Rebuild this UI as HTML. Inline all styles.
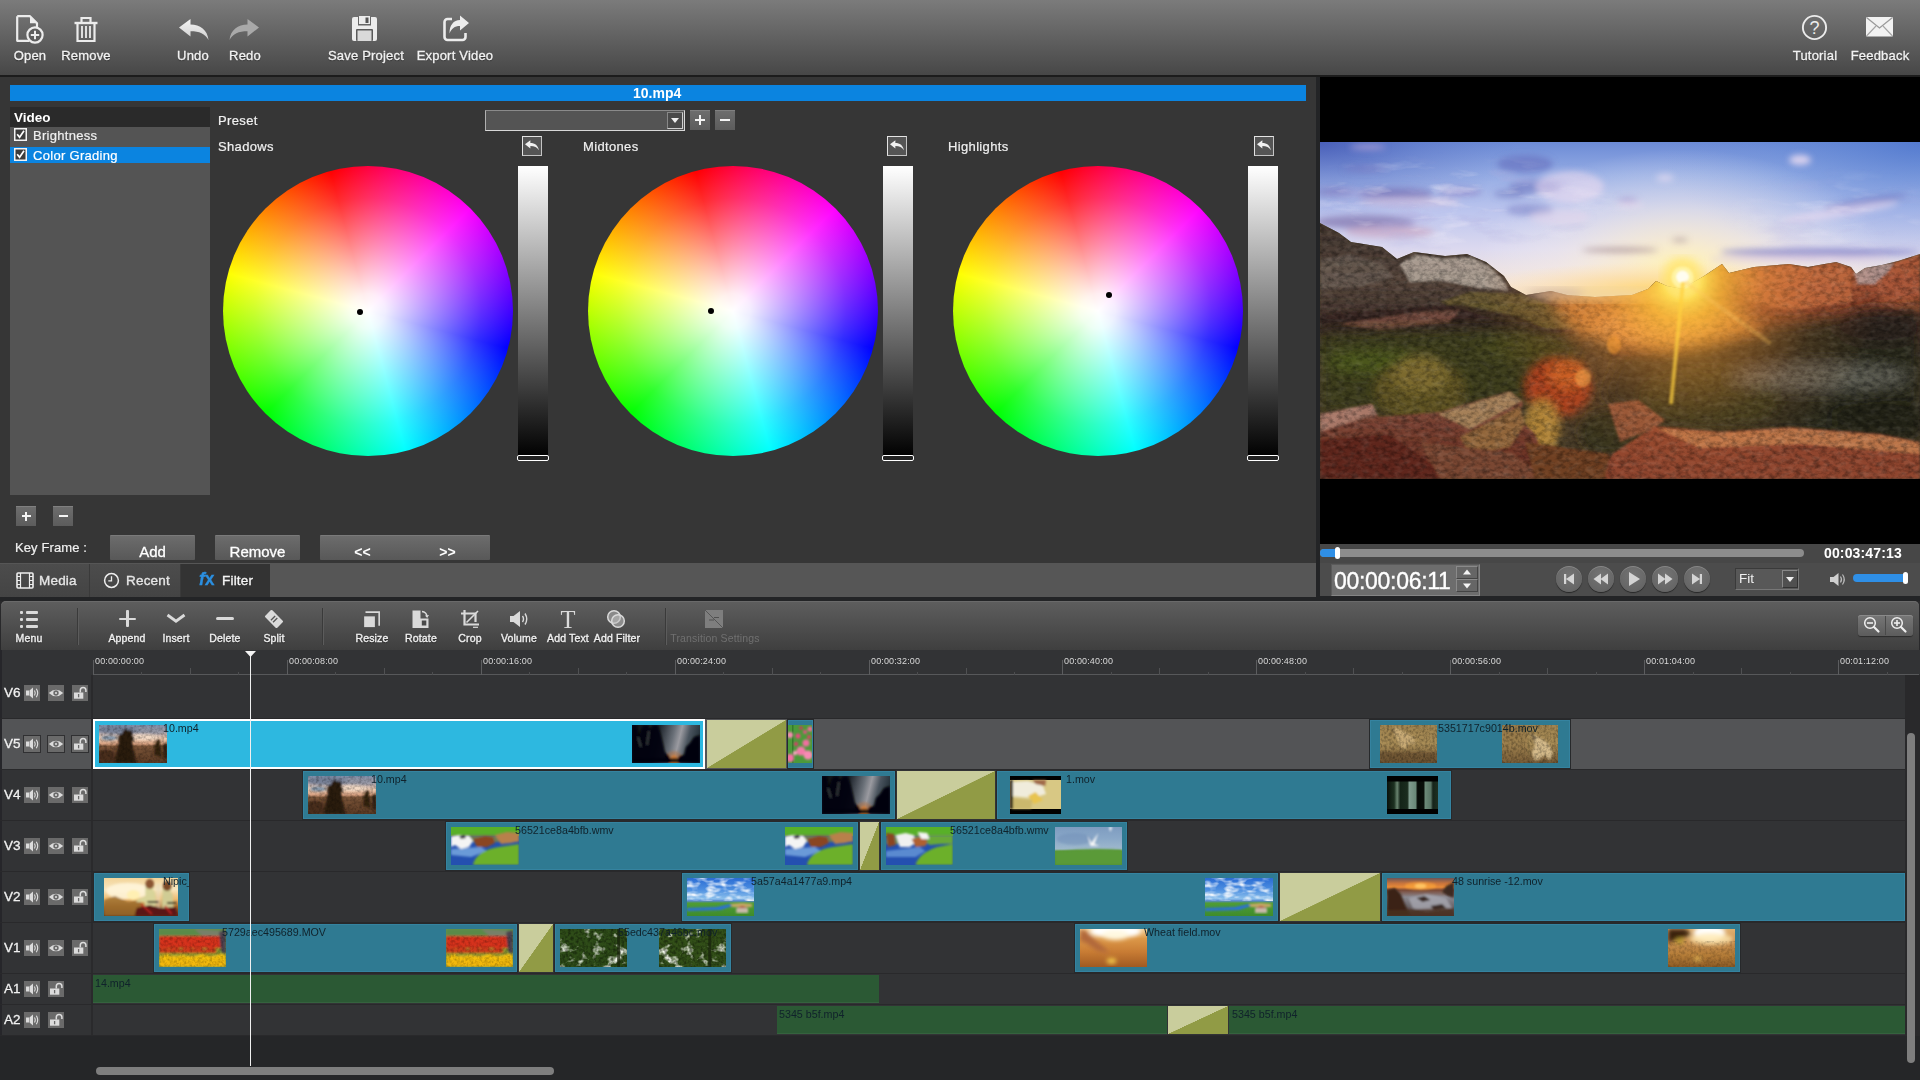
<!DOCTYPE html><html><head><meta charset="utf-8"><title>Video Editor</title><style>
*{box-sizing:border-box;margin:0;padding:0}
html,body{width:1920px;height:1080px;overflow:hidden;background:#29292b;font-family:"Liberation Sans",sans-serif;color:#f0f0f0}
div,span,svg{position:absolute}
.t{white-space:nowrap;line-height:1;will-change:transform}
.tb{letter-spacing:.2px;font-size:13px;top:49px;height:14px;text-align:center;color:#f2f2f2;-webkit-text-stroke:.3px #f2f2f2;text-shadow:0 1px 1px rgba(0,0,0,.45)}
.tl{letter-spacing:.15px;font-size:10.5px;top:633px;height:12px;text-align:center;color:#f0f0f0;-webkit-text-stroke:.35px #f0f0f0;text-shadow:0 1px 1px rgba(0,0,0,.5)}
.btn{background:linear-gradient(#6c6c6c,#585858);border-top:1px solid #7a7a7a;border-radius:1px}
.sq{background:linear-gradient(#6e6e6e,#5c5c5c);box-shadow:inset 0 1px 0 #808080}
.lbl{font-size:13px;color:#f0f0f0}
.ib{width:16px;height:16px;background:#6a6a6a}
.th{font-size:13.5px;color:#f0f0f0;left:4px;-webkit-text-stroke:.3px #f0f0f0}
.clip{background:#2f7a92;box-shadow:0 0 0 1px #27292b,inset 0 0 0 1px #3583a0}
.aclip{background:#2b5934;box-shadow:inset 0 -1px 0 #35623e}
.cl{font-size:10.7px;color:#10222b;top:3.5px}
.tr{background:linear-gradient(to bottom right,#c9cd9c 0,#c9cd9c 49.7%,#919b45 50.3%,#919b45 100%)}
.rl{font-size:9px;color:#d8d8d8;top:657px;letter-spacing:.14px}
</style></head><body>
<div style="left:0px;top:0px;width:1920px;height:75px;background:linear-gradient(#7b7b7b,#474747)"></div>
<div style="left:0px;top:75px;width:1920px;height:2px;background:#1c1c1c"></div>
<svg style="left:14px;top:13px" width="34" height="34" viewBox="0 0 34 34"><path d="M3.2 3.2h12.8l7 7v8.5" fill="none" stroke="#ececec" stroke-width="2.2" stroke-linejoin="round"/><path d="M3.2 3.2v24.6h12" fill="none" stroke="#ececec" stroke-width="2.2" stroke-linejoin="round"/><path d="M16 3.2v7h7z" fill="#ececec"/><circle cx="21" cy="22" r="7.6" fill="#5d5d5d" stroke="#ececec" stroke-width="2.2"/><path d="M21 17.8v8.4M16.8 22h8.4" stroke="#ececec" stroke-width="2"/></svg>
<span class="t tb" style="left:-30.0px;width:120px;">Open</span>
<svg style="left:72px;top:14px" width="28" height="30" viewBox="0 0 28 30"><path d="M2.5 9h23" stroke="#ececec" stroke-width="2.4"/><path d="M9.5 8.5v-4.5h9v4.5" fill="none" stroke="#ececec" stroke-width="2.2"/><path d="M5.5 10v17h17v-17" fill="none" stroke="#ececec" stroke-width="2.2"/><path d="M10 12v12M14 12v12M18 12v12" stroke="#ececec" stroke-width="1.8"/></svg>
<span class="t tb" style="left:26.0px;width:120px;">Remove</span>
<svg style="left:179px;top:19px" width="30" height="22" viewBox="0 0 30 22"><defs><linearGradient id="gu" x1="0" y1="0" x2="0" y2="1"><stop offset="0" stop-color="#f4f4f4"/><stop offset="1" stop-color="#cfcfcf"/></linearGradient></defs><path d="M0 8.5 L11.5 0 V5.5 C21 5.5 28.5 11 29.5 21 C26 14.5 20.5 12.2 11.5 12.2 V17.5 Z" fill="url(#gu)"/></svg>
<span class="t tb" style="left:133.0px;width:120px;">Undo</span>
<svg style="left:229px;top:19px" width="30" height="22" viewBox="0 0 30 22"><g transform="translate(30,0) scale(-1,1)"><path d="M0 8.5 L11.5 0 V5.5 C21 5.5 28.5 11 29.5 21 C26 14.5 20.5 12.2 11.5 12.2 V17.5 Z" fill="#a9a9a9"/></g></svg>
<span class="t tb" style="left:184.5px;width:120px;">Redo</span>
<svg style="left:351px;top:16px" width="27" height="26" viewBox="0 0 27 26"><path d="M3 1h21a2 2 0 0 1 2 2v20a2 2 0 0 1-2 2H3a2 2 0 0 1-2-2V3a2 2 0 0 1 2-2z" fill="#ececec"/><rect x="7" y="1" width="13" height="8.5" fill="#666"/><rect x="8" y="0" width="11" height="8" fill="#ececec"/><rect x="14.5" y="1.5" width="3" height="5.5" fill="#555"/><rect x="5" y="13" width="17" height="12" rx="1" fill="#5a5a5a"/><rect x="6.5" y="14.5" width="14" height="10.5" fill="#d9d9d9"/></svg>
<span class="t tb" style="left:305.5px;width:120px;">Save Project</span>
<svg style="left:442px;top:14px" width="28" height="29" viewBox="0 0 28 29"><path d="M10 5H5.5a3 3 0 0 0-3 3v15a3 3 0 0 0 3 3h15a3 3 0 0 0 3-3v-4" fill="none" stroke="#ececec" stroke-width="2.6"/><path d="M18 1.5 L27 9 L18 16.5 V12 C12.5 12 9.5 14.5 7.5 19.5 C7.5 11 11.5 6.2 18 6 Z" fill="#ececec"/></svg>
<span class="t tb" style="left:395.0px;width:120px;">Export Video</span>
<svg style="left:1801px;top:14px" width="28" height="28" viewBox="0 0 28 28"><circle cx="13.5" cy="13.5" r="11.6" fill="none" stroke="#ececec" stroke-width="1.9"/><text x="13.5" y="20" font-family="Liberation Sans" font-size="18" fill="#ececec" text-anchor="middle">?</text></svg>
<span class="t tb" style="left:1754.5px;width:120px;">Tutorial</span>
<svg style="left:1865px;top:16px" width="30" height="22" viewBox="0 0 30 22"><rect x="1" y="1" width="27" height="19.5" rx="1" fill="#f2f2f2"/><path d="M1.5 1.5 L14.5 12 L27.5 1.5" fill="none" stroke="#9a9a9a" stroke-width="1.3"/><path d="M1.5 20 L11 10M27.5 20 L18 10" stroke="#a5a5a5" stroke-width="1.1"/></svg>
<span class="t tb" style="left:1819.5px;width:120px;">Feedback</span>
<div style="left:0px;top:77px;width:1316px;height:487px;background:#363636"></div>
<div style="left:10px;top:85px;width:1296px;height:16px;background:#0b84e0"></div>
<span class="t" style="left:633px;top:86px;font-size:14px;font-weight:bold;color:#fff">10.mp4</span>
<div style="left:10px;top:107px;width:200px;height:388px;background:#545454"></div>
<div style="left:10px;top:107px;width:200px;height:20px;background:#2a2a2a"></div>
<span class="t" style="left:14px;top:111px;font-size:13.5px;font-weight:bold;color:#fff">Video</span>
<div style="left:10px;top:147px;width:200px;height:16px;background:#0b84e0"></div>
<svg style="left:14px;top:128px" width="13" height="13" viewBox="0 0 13 13"><rect x="0.75" y="0.75" width="11.5" height="11.5" fill="#3c3c3c" stroke="#f4f4f4" stroke-width="1.5"/><path d="M3.2 6.2 L5.6 9.2 L10 2.8" fill="none" stroke="#fff" stroke-width="1.7"/></svg>
<span class="t" style="left:33px;top:129px;font-size:13px;letter-spacing:.3px;-webkit-text-stroke:.2px #f0f0f0">Brightness</span>
<svg style="left:14px;top:148px" width="13" height="13" viewBox="0 0 13 13"><rect x="0.75" y="0.75" width="11.5" height="11.5" fill="#3c3c3c" stroke="#f4f4f4" stroke-width="1.5"/><path d="M3.2 6.2 L5.6 9.2 L10 2.8" fill="none" stroke="#fff" stroke-width="1.7"/></svg>
<span class="t" style="left:33px;top:149px;font-size:13px;color:#fff;letter-spacing:.3px;-webkit-text-stroke:.2px #fff">Color Grading</span>
<span class="t" style="left:218px;top:114px;font-size:13px;letter-spacing:.35px;-webkit-text-stroke:.2px #f0f0f0">Preset</span>
<div style="left:485px;top:110px;width:200px;height:21px;background:#545454;border:1px solid #d8d8d8;border-top-color:#8a8a8a;border-left-color:#b0b0b0"></div>
<div style="left:667px;top:112px;width:16px;height:17px;background:#4a4a4a;border:1px solid #cfcfcf;border-top-color:#888;border-left-color:#888"></div>
<svg style="left:670px;top:117px" width="10" height="7" viewBox="0 0 10 7"><path d="M1 1h8L5 6z" fill="#f0f0f0"/></svg>
<div class="sq" style="left:690px;top:110px;width:20px;height:20px;"></div><div style="left:695.0px;top:119.0px;width:10px;height:2px;background:#f4f4f4"></div><div style="left:699.0px;top:115.0px;width:2px;height:10px;background:#f4f4f4"></div>
<div class="sq" style="left:715px;top:110px;width:20px;height:20px;"></div><div style="left:720.0px;top:119.0px;width:10px;height:2px;background:#f4f4f4"></div>
<span class="t" style="left:218px;top:140px;font-size:13px;letter-spacing:.35px;-webkit-text-stroke:.2px #f0f0f0">Shadows</span>
<div style="left:522px;top:136px;width:20px;height:20px;background:#555;border:1.3px solid #e4e4e4;border-right-color:#c4c4c4;border-bottom-color:#c4c4c4"></div>
<svg style="left:525px;top:140px" width="14" height="11" viewBox="0 0 30 22"><path d="M0 8.5 L11.5 0 V5.5 C21 5.5 28.5 11 29.5 21 C26 14.5 20.5 12.2 11.5 12.2 V17.5 Z" fill="#f0f0f0"/></svg>
<div style="left:223px;top:166px;width:290px;height:290px;border-radius:50%;background:radial-gradient(circle closest-side,#fff 0,rgba(255,255,255,.93) 12%,rgba(255,255,255,.55) 45%,rgba(255,255,255,.18) 78%,rgba(255,255,255,0) 100%),conic-gradient(from -15deg,#f00,#f0f,#00f,#0ff,#0f0,#ff0,#f00)"></div>
<div style="left:357px;top:309px;width:6px;height:6px;border-radius:50%;background:#000"></div>
<div style="left:518px;top:166px;width:30px;height:291px;background:linear-gradient(#fff,#000)"></div>
<div style="left:517px;top:455px;width:32px;height:6px;border:1.5px solid #fff;border-radius:2px;background:#222"></div>
<span class="t" style="left:583px;top:140px;font-size:13px;letter-spacing:.35px;-webkit-text-stroke:.2px #f0f0f0">Midtones</span>
<div style="left:887px;top:136px;width:20px;height:20px;background:#555;border:1.3px solid #e4e4e4;border-right-color:#c4c4c4;border-bottom-color:#c4c4c4"></div>
<svg style="left:890px;top:140px" width="14" height="11" viewBox="0 0 30 22"><path d="M0 8.5 L11.5 0 V5.5 C21 5.5 28.5 11 29.5 21 C26 14.5 20.5 12.2 11.5 12.2 V17.5 Z" fill="#f0f0f0"/></svg>
<div style="left:588px;top:166px;width:290px;height:290px;border-radius:50%;background:radial-gradient(circle closest-side,#fff 0,rgba(255,255,255,.93) 12%,rgba(255,255,255,.55) 45%,rgba(255,255,255,.18) 78%,rgba(255,255,255,0) 100%),conic-gradient(from -15deg,#f00,#f0f,#00f,#0ff,#0f0,#ff0,#f00)"></div>
<div style="left:708px;top:308px;width:6px;height:6px;border-radius:50%;background:#000"></div>
<div style="left:883px;top:166px;width:30px;height:291px;background:linear-gradient(#fff,#000)"></div>
<div style="left:882px;top:455px;width:32px;height:6px;border:1.5px solid #fff;border-radius:2px;background:#222"></div>
<span class="t" style="left:948px;top:140px;font-size:13px;letter-spacing:.35px;-webkit-text-stroke:.2px #f0f0f0">Highlights</span>
<div style="left:1254px;top:136px;width:20px;height:20px;background:#555;border:1.3px solid #e4e4e4;border-right-color:#c4c4c4;border-bottom-color:#c4c4c4"></div>
<svg style="left:1257px;top:140px" width="14" height="11" viewBox="0 0 30 22"><path d="M0 8.5 L11.5 0 V5.5 C21 5.5 28.5 11 29.5 21 C26 14.5 20.5 12.2 11.5 12.2 V17.5 Z" fill="#f0f0f0"/></svg>
<div style="left:953px;top:166px;width:290px;height:290px;border-radius:50%;background:radial-gradient(circle closest-side,#fff 0,rgba(255,255,255,.93) 12%,rgba(255,255,255,.55) 45%,rgba(255,255,255,.18) 78%,rgba(255,255,255,0) 100%),conic-gradient(from -15deg,#f00,#f0f,#00f,#0ff,#0f0,#ff0,#f00)"></div>
<div style="left:1106px;top:292px;width:6px;height:6px;border-radius:50%;background:#000"></div>
<div style="left:1248px;top:166px;width:30px;height:291px;background:linear-gradient(#fff,#000)"></div>
<div style="left:1247px;top:455px;width:32px;height:6px;border:1.5px solid #fff;border-radius:2px;background:#222"></div>
<div class="sq" style="left:16px;top:506px;width:20px;height:20px;"></div><div style="left:21.5px;top:515.0px;width:9px;height:2px;background:#f4f4f4"></div><div style="left:25.0px;top:511.5px;width:2px;height:9px;background:#f4f4f4"></div>
<div class="sq" style="left:53px;top:506px;width:20px;height:20px;"></div><div style="left:58.5px;top:515.0px;width:9px;height:2px;background:#f4f4f4"></div>
<span class="t" style="left:15px;top:541px;font-size:13px;letter-spacing:.1px;-webkit-text-stroke:.2px #f0f0f0">Key Frame :</span>
<div class="btn" style="left:110px;top:535px;width:85px;height:25px;overflow:hidden"><span class="t" style="left:0;width:85px;text-align:center;top:8px;font-size:15px;color:#fff;-webkit-text-stroke:.3px #fff">Add</span></div>
<div class="btn" style="left:215px;top:535px;width:85px;height:25px;overflow:hidden"><span class="t" style="left:0;width:85px;text-align:center;top:8px;font-size:15px;color:#fff;-webkit-text-stroke:.3px #fff">Remove</span></div>
<div class="btn" style="left:320px;top:535px;width:170px;height:25px;overflow:hidden"><span class="t" style="left:0;width:85px;text-align:center;top:9px;font-size:14px;font-weight:bold;color:#fff">&lt;&lt;</span><span class="t" style="left:85px;width:85px;text-align:center;top:9px;font-size:14px;font-weight:bold;color:#fff">&gt;&gt;</span></div>
<div style="left:0px;top:563px;width:1316px;height:34px;background:#565656"></div>
<div style="left:0px;top:564px;width:89px;height:33px;background:linear-gradient(#4c4c4c,#444)"></div>
<div style="left:90px;top:564px;width:90px;height:33px;background:linear-gradient(#4c4c4c,#444)"></div>
<div style="left:181px;top:564px;width:89px;height:33px;background:#333"></div>
<div style="left:89px;top:564px;width:1px;height:33px;background:#3a3a3a"></div>
<div style="left:180px;top:564px;width:1px;height:33px;background:#3a3a3a"></div>
<svg style="left:16px;top:572px" width="18" height="17" viewBox="0 0 18 17"><rect x="1" y="1" width="16" height="15" rx="1" fill="none" stroke="#eee" stroke-width="1.6"/><path d="M4.5 1v15M13.5 1v15" stroke="#eee" stroke-width="1.2"/><path d="M1 4.5h3.5M1 8.5h3.5M1 12.500h3.5M13.5 4.5h3.500M13.5 8.5h3.5M13.5 12.5h3.500" stroke="#eee" stroke-width="1.1"/></svg>
<span class="t" style="left:39px;top:573.5px;font-size:13.5px;letter-spacing:.2px;color:#e6e6e6;-webkit-text-stroke:.35px #e6e6e6">Media</span>
<svg style="left:103px;top:572px" width="17" height="17" viewBox="0 0 17 17"><circle cx="8.5" cy="8.5" r="6.9" fill="none" stroke="#eee" stroke-width="1.5"/><path d="M8.5 4.3v4.6H5.3" fill="none" stroke="#eee" stroke-width="1.3"/></svg>
<span class="t" style="left:126px;top:573.5px;font-size:13.5px;letter-spacing:.2px;color:#e6e6e6;-webkit-text-stroke:.35px #e6e6e6">Recent</span>
<span class="t" style="left:199px;top:571px;font-size:17.5px;font-weight:bold;color:#2b8fe0;-webkit-text-stroke:.3px #2b8fe0;font-family:'Liberation Sans',sans-serif"><i>f</i>x</span>
<span class="t" style="left:222px;top:573.5px;font-size:13.5px;letter-spacing:.2px;color:#f4f4f4;-webkit-text-stroke:.35px #f4f4f4">Filter</span>
<div style="left:1316px;top:77px;width:4px;height:524px;background:#232426"></div>
<div style="left:1320px;top:77px;width:600px;height:467px;background:#000"></div>
<svg style="left:1320px;top:142px" width="600" height="337" viewBox="0 0 600 337">
<defs>
<linearGradient id="sky" x1="0" y1="0" x2="0" y2="1"><stop offset="0" stop-color="#6c8bd6"/><stop offset=".2" stop-color="#95ace4"/><stop offset=".42" stop-color="#bcc5ee"/><stop offset=".65" stop-color="#dcd9ef"/><stop offset=".85" stop-color="#f2e3da"/><stop offset="1" stop-color="#f8d8a8"/></linearGradient>
<radialGradient id="skyd" cx="0" cy="0" r="1" gradientUnits="userSpaceOnUse" gradientTransform="translate(0 0) scale(200 80)"><stop offset="0" stop-color="#3a4cac" stop-opacity=".7"/><stop offset=".5" stop-color="#4a60b8" stop-opacity=".3"/><stop offset="1" stop-color="#5a70c0" stop-opacity="0"/></radialGradient>
<radialGradient id="skyr" cx="0" cy="0" r="1" gradientUnits="userSpaceOnUse" gradientTransform="translate(600 0) scale(260 130)"><stop offset="0" stop-color="#4a74cc" stop-opacity=".7"/><stop offset=".5" stop-color="#5a84d4" stop-opacity=".3"/><stop offset="1" stop-color="#6a90d8" stop-opacity="0"/></radialGradient>
<radialGradient id="sunsky" cx="0" cy="0" r="1" gradientUnits="userSpaceOnUse" gradientTransform="translate(362 132) scale(210 125)"><stop offset="0" stop-color="#fffbe6"/><stop offset=".1" stop-color="#fff2b8" stop-opacity=".95"/><stop offset=".3" stop-color="#fff0cc" stop-opacity=".7"/><stop offset=".6" stop-color="#fff4e8" stop-opacity=".35"/><stop offset="1" stop-color="#fff" stop-opacity="0"/></radialGradient>
<radialGradient id="hz" cx="0" cy="0" r="1" gradientUnits="userSpaceOnUse" gradientTransform="translate(340 146) scale(190 26)"><stop offset="0" stop-color="#ffd470" stop-opacity=".9"/><stop offset=".5" stop-color="#fcd898" stop-opacity=".55"/><stop offset="1" stop-color="#ffe0b0" stop-opacity="0"/></radialGradient>
<radialGradient id="sun" cx="362" cy="138" r="200" gradientUnits="userSpaceOnUse"><stop offset="0" stop-color="#fffde8"/><stop offset=".04" stop-color="#fff6a8"/><stop offset=".1" stop-color="#ffdc50" stop-opacity=".97"/><stop offset=".2" stop-color="#ffbc38" stop-opacity=".8"/><stop offset=".42" stop-color="#ff9c38" stop-opacity=".4"/><stop offset=".7" stop-color="#ff8838" stop-opacity=".12"/><stop offset="1" stop-color="#ff8030" stop-opacity="0"/></radialGradient>
<linearGradient id="gl" x1="0" y1="0" x2="0" y2="1"><stop offset="0" stop-color="#453832"/><stop offset=".45" stop-color="#54443a"/><stop offset=".8" stop-color="#3c2c26"/><stop offset="1" stop-color="#3a3a1c"/></linearGradient>
<linearGradient id="gr" x1="0" y1="0" x2="0" y2="1"><stop offset="0" stop-color="#b4643e"/><stop offset=".45" stop-color="#8c432c"/><stop offset="1" stop-color="#3a2a20"/></linearGradient>
<linearGradient id="fg" x1="0" y1="0" x2="0" y2="1"><stop offset="0" stop-color="#84503e"/><stop offset="1" stop-color="#64291d"/></linearGradient>
<filter id="b2" x="-10%" y="-10%" width="120%" height="120%"><feGaussianBlur stdDeviation="1.100"/></filter>
<filter id="b3" x="-10%" y="-20%" width="120%" height="140%"><feGaussianBlur stdDeviation="3"/></filter>
<filter id="b4" x="-10%" y="-10%" width="120%" height="120%"><feGaussianBlur stdDeviation="4"/></filter>
<filter id="b8" x="-20%" y="-20%" width="140%" height="140%"><feGaussianBlur stdDeviation="7"/></filter>
<filter id="b1" x="-10%" y="-10%" width="120%" height="120%"><feGaussianBlur stdDeviation=".8"/></filter>
<filter id="nz" x="0" y="0" width="100%" height="100%"><feTurbulence type="fractalNoise" baseFrequency=".16 .22" numOctaves="3" seed="7"/><feColorMatrix values="0 0 0 0 0  0 0 0 0 0  0 0 0 0 0  1.600 0 0 0 -.62"/></filter>
<filter id="nzl" x="0" y="0" width="100%" height="100%"><feTurbulence type="fractalNoise" baseFrequency=".12 .2" numOctaves="2" seed="3"/><feColorMatrix values="0 0 0 0 1  0 0 0 0 .95  0 0 0 0 .85  0 1.600 0 0 -.7"/></filter>
<filter id="cw" x="0" y="0" width="100%" height="100%"><feTurbulence type="fractalNoise" baseFrequency=".018 .06" numOctaves="4" seed="11"/><feColorMatrix values="0 0 0 0 .45  0 0 0 0 .43  0 0 0 0 .74  0 3.200 0 0 -1.700"/></filter>
<filter id="cw2" x="0" y="0" width="100%" height="100%"><feTurbulence type="fractalNoise" baseFrequency=".02 .07" numOctaves="4" seed="23"/><feColorMatrix values="0 0 0 0 .96  0 0 0 0 .9  0 0 0 0 .96  0 3.200 0 0 -1.750"/></filter>
<radialGradient id="cm1" cx="0" cy="0" r="1" gradientUnits="userSpaceOnUse" gradientTransform="translate(120 62) scale(200 52)"><stop offset="0" stop-color="#fff"/><stop offset=".6" stop-color="#fff" stop-opacity=".7"/><stop offset="1" stop-color="#fff" stop-opacity="0"/></radialGradient>
<radialGradient id="cm2" cx="0" cy="0" r="1" gradientUnits="userSpaceOnUse" gradientTransform="translate(520 75) scale(120 50)"><stop offset="0" stop-color="#fff" stop-opacity=".8"/><stop offset="1" stop-color="#fff" stop-opacity="0"/></radialGradient>
<mask id="cmk"><rect width="600" height="165" fill="#000"/><rect width="600" height="165" fill="url(#cm1)"/><rect width="600" height="165" fill="url(#cm2)"/></mask>
<clipPath id="cp"><rect x="0" y="0" width="600" height="337"/></clipPath>
<clipPath id="land"><path d="M0 81L19 91L31 100L62 105L77 117L94 110L125 114L147 112L166 120L184 134L191 145L206 153L231 149L247 153L275 155L312 153L328 147L336 139L347 144L362 147L384 134L402 122L409 131L434 125L469 122L488 125L516 120L531 125L536 132L545 126L562 123L578 119L600 112V337H0z"/></clipPath>
</defs>
<g clip-path="url(#cp)">
<rect width="600" height="165" fill="url(#sky)"/>
<rect width="600" height="165" fill="url(#skyd)"/>
<rect width="600" height="165" fill="url(#skyr)"/>
<rect width="600" height="337" fill="url(#sunsky)"/>
<rect width="600" height="180" fill="url(#hz)"/>
<g filter="url(#b3)">
<ellipse cx="48" cy="5" rx="18" ry="3" fill="#a89cd4" opacity="0.8"/>
<ellipse cx="45" cy="27" rx="22" ry="3" fill="#7a78c0" opacity="0.5"/>
<ellipse cx="75" cy="52" rx="38" ry="6" fill="#7670b4" opacity="0.7"/>
<ellipse cx="90" cy="60" rx="50" ry="5" fill="#d8c4e0" opacity="0.6"/>
<ellipse cx="15" cy="50" rx="20" ry="4" fill="#8078bc" opacity="0.6"/>
<ellipse cx="140" cy="50" rx="22" ry="4" fill="#8880c4" opacity="0.6"/>
<ellipse cx="45" cy="80" rx="50" ry="7" fill="#8478b0" opacity="0.75"/>
<ellipse cx="70" cy="90" rx="45" ry="6" fill="#caa8c4" opacity="0.7"/>
<ellipse cx="205" cy="22" rx="28" ry="9" fill="#6a74c0" opacity="0.7"/>
<ellipse cx="215" cy="45" rx="26" ry="7" fill="#7078c0" opacity="0.6"/>
<ellipse cx="210" cy="68" rx="24" ry="6" fill="#7880c4" opacity="0.55"/>
<ellipse cx="250" cy="45" rx="34" ry="16" fill="#ecdcf0" opacity="0.6"/>
<ellipse cx="240" cy="75" rx="30" ry="8" fill="#e8d8ec" opacity="0.5"/>
<ellipse cx="190" cy="52" rx="16" ry="4" fill="#6a70b8" opacity="0.5"/>
<ellipse cx="480" cy="18" rx="11" ry="5" fill="#e4d8f0" opacity="0.9"/>
<ellipse cx="345" cy="36" rx="9" ry="4" fill="#e0d8f0" opacity="0.7"/>
<ellipse cx="308" cy="58" rx="10" ry="3" fill="#a8a0d4" opacity="0.7"/>
<ellipse cx="310" cy="63" rx="14" ry="3" fill="#ecdcec" opacity="0.6"/>
<ellipse cx="545" cy="60" rx="42" ry="3.5" fill="#7078c0" opacity="0.7" transform="rotate(-9 545 60)"/>
<ellipse cx="520" cy="70" rx="60" ry="5" fill="#ecdcf0" opacity="0.6" transform="rotate(-9 520 70)"/>
<ellipse cx="500" cy="110" rx="100" ry="4" fill="#8484c8" opacity="0.8"/>
<ellipse cx="480" cy="117" rx="90" ry="4" fill="#d8c8e0" opacity="0.6"/>
<ellipse cx="300" cy="108" rx="38" ry="2.5" fill="#a08890" opacity="0.7"/>
<ellipse cx="360" cy="98" rx="8" ry="2" fill="#a08890" opacity="0.6"/>
</g>
<g mask="url(#cmk)"><rect width="600" height="150" filter="url(#cw)" opacity=".55"/><rect y="6" width="600" height="150" filter="url(#cw2)" opacity=".5"/></g>
<g clip-path="url(#land)">
<rect y="75" width="600" height="262" fill="#463a26"/>
<g filter="url(#b2)">
<path d="M0 81L19 91L31 100L62 105L77 117L94 110L125 114L147 112L166 120L184 134L191 145L206 153L231 149L260 160L300 185L0 215z" fill="url(#gl)"/>
<path d="M0 118L30 112L62 122L75 135L40 145L0 148z" fill="#80746c" opacity=".4"/>
<path d="M80 122L96 113L125 117L150 115L168 124L183 138L188 148L160 146L120 138L90 140z" fill="#b8aca0" opacity=".85"/>
<path d="M150 150L200 152L250 170L290 188L200 186L120 160z" fill="#6e6030" opacity=".8"/>
<path d="M0 172L60 168L140 162L200 175L230 188L100 190L0 192z" fill="#352622" opacity=".85"/>
<path d="M20 182L100 170L140 168L130 180L60 188z" fill="#8a5a48" opacity=".7"/>
</g>
<g filter="url(#b2)">
<path d="M312 153L328 147L336 139L347 144L362 147L384 134L402 122L409 131L434 125L469 122L488 125L516 120L531 125L536 132L545 126L562 123L578 119L600 112V215H290z" fill="url(#gr)"/>
<path d="M534 131L546 125L562 122L574 121L560 142L538 142z" fill="#b49a98" opacity=".9"/>
<path d="M415 130L434 127L469 124L488 127L516 122L530 128L532 160L470 168L430 160z" fill="#bc6840" opacity=".75"/>
<path d="M556 140L580 120L600 114V170L560 165z" fill="#ac5838" opacity=".85"/>
</g>
<g filter="url(#b8)">
<path d="M225 152L330 150L400 160L450 190L400 205L300 205L255 190z" fill="#c07a38"/>
<ellipse cx="330" cy="185" rx="60" ry="16" fill="#d89048"/>
<path d="M0 192L200 186L260 200L240 255L150 262L0 270z" fill="#3c3e1a"/>
<ellipse cx="50" cy="220" rx="45" ry="10" fill="#4e5a1e"/>
<ellipse cx="200" cy="205" rx="40" ry="10" fill="#4a4a1c"/>
<path d="M450 185L600 165V300L480 290L340 290L285 255L300 215z" fill="#2c2a1c"/>
<ellipse cx="390" cy="255" rx="70" ry="32" fill="#36381a"/>
<ellipse cx="500" cy="235" rx="90" ry="13" fill="#6a6a60" opacity=".8"/>
<ellipse cx="560" cy="185" rx="45" ry="18" fill="#2c241e"/>
<ellipse cx="560" cy="275" rx="50" ry="18" fill="#242018"/>
</g>
<g filter="url(#b4)">
<ellipse cx="100" cy="248" rx="46" ry="32" fill="#5e5224"/>
<ellipse cx="100" cy="232" rx="28" ry="20" fill="#807030" opacity=".85"/>
<ellipse cx="238" cy="245" rx="34" ry="30" fill="#a43e1c"/>
<ellipse cx="248" cy="232" rx="20" ry="15" fill="#c45a22"/>
<ellipse cx="222" cy="285" rx="18" ry="28" fill="#b08438"/>
<ellipse cx="290" cy="290" rx="30" ry="22" fill="#33301a"/>
</g>
<g filter="url(#b2)">
<path d="M0 272L52 262L58 275L120 270L190 249L203 260L200 278L215 292L232 337H0z" fill="url(#fg)"/>
<path d="M0 272L52 262L57 272L0 290z" fill="#a87868"/>
<path d="M118 272L190 250L202 259L150 287z" fill="#a8845c" opacity=".95"/>
<path d="M140 295L200 264L205 282L190 305L150 312z" fill="#94683c" opacity=".95"/>
<path d="M0 298L70 292L130 337H0z" fill="#5e261c"/>
<path d="M100 300L190 310L230 337H120z" fill="#7a4630"/>
<path d="M280 337L292 312L335 284L400 290L470 285L560 292L600 300V337z" fill="#8f452e"/>
<path d="M336 286L400 291L470 286L560 293L600 301V312L480 302L380 306z" fill="#c07a4c" opacity=".9"/>
<path d="M288 262L318 258L345 278L334 286L300 300z" fill="#8e5238"/>
<path d="M205 300L290 312L285 337H215z" fill="#704024"/>
</g>
<rect y="80" width="600" height="257" filter="url(#nz)" opacity=".5"/>
<rect y="80" width="600" height="257" filter="url(#nzl)" opacity=".13"/>
</g>
<g filter="url(#b4)"><ellipse cx="285" cy="153" rx="75" ry="7" fill="#f2d498" opacity=".75"/><ellipse cx="235" cy="151" rx="30" ry="4" fill="#b8a0a8" opacity=".5"/></g>
<g clip-path="url(#land)"><rect width="600" height="337" fill="url(#sun)"/></g>
<circle cx="362.500" cy="136" r="20" fill="#ffe468" opacity=".8" filter="url(#b4)"/>
<circle cx="362.500" cy="135.500" r="11" fill="#fff4a8" opacity=".9" filter="url(#b2)"/>
<circle cx="362.500" cy="135" r="6.500" fill="#fffdf0" filter="url(#b1)"/>
<g filter="url(#b1)"><path d="M361 140L349 262L353 262L365 140z" fill="#ffd040" opacity=".7"/><path d="M366 138L452 200L449 203L363 141z" fill="#ffc860" opacity=".3"/><ellipse cx="294" cy="203" rx="7" ry="9" fill="#ffa030" opacity=".5"/><ellipse cx="263" cy="236" rx="8" ry="9" fill="#ffb050" opacity=".5"/></g>
</g></svg>
<div style="left:1320px;top:544px;width:600px;height:19px;background:#474747"></div>
<div style="left:1320px;top:549px;width:484px;height:8px;background:#8c8c8c;border-radius:4px"></div>
<div style="left:1320px;top:549px;width:18px;height:8px;background:#2f8fe6;border-radius:4px 0 0 4px"></div>
<div style="left:1335px;top:547px;width:5px;height:12px;background:#fff;border-radius:2.5px"></div>
<span class="t" style="left:1824px;top:546px;font-size:14px;font-weight:bold;color:#fff;letter-spacing:.15px">00:03:47:13</span>
<div style="left:1320px;top:563px;width:600px;height:33px;background:#4c4c4c"></div>
<div style="left:1331px;top:564px;width:149px;height:32px;background:#6d6d6d;border:1px solid #858585;border-top-color:#5a5a5a;border-left-color:#5a5a5a"></div>
<span class="t dg" style="left:1334px;top:570px;font-size:23px;color:#fff;letter-spacing:-.3px;-webkit-text-stroke:.35px #fff">00:00:06:11</span>
<div style="left:1456px;top:566px;width:22px;height:13px;background:#666;border:1px solid #8a8a8a;border-bottom-color:#444;border-right-color:#444"></div>
<div style="left:1456px;top:579px;width:22px;height:13px;background:#666;border:1px solid #8a8a8a;border-bottom-color:#444;border-right-color:#444"></div>
<svg style="left:1463px;top:569px" width="8" height="6" viewBox="0 0 8 6"><path d="M0 5.5L4 .5L8 5.500z" fill="#f4f4f4"/></svg>
<svg style="left:1463px;top:583px" width="8" height="6" viewBox="0 0 8 6"><path d="M0 .5L4 5.500L8 .5z" fill="#f4f4f4"/></svg>
<div style="left:1555.5px;top:565.5px;width:26px;height:26px;border-radius:50%;background:radial-gradient(circle at 50% 35%,#747474,#666 70%,#5a5a5a);box-shadow:0 1px 1px rgba(0,0,0,.5),inset 0 1px 0 rgba(255,255,255,.18)"></div>
<svg style="left:1555.5px;top:565.5px" width="26" height="26" viewBox="-13 -13 26 26"><path d="M-5 -5h2.200v10h-2.200zM5 -5.500v11L-3 0z" fill="#d4d4d4"/></svg>
<div style="left:1587.5px;top:565.5px;width:26px;height:26px;border-radius:50%;background:radial-gradient(circle at 50% 35%,#747474,#666 70%,#5a5a5a);box-shadow:0 1px 1px rgba(0,0,0,.5),inset 0 1px 0 rgba(255,255,255,.18)"></div>
<svg style="left:1587.5px;top:565.5px" width="26" height="26" viewBox="-13 -13 26 26"><path d="M0 -5.500v11L-7.500 0zM7 -5.500v11L-.5 0z" fill="#d4d4d4"/></svg>
<div style="left:1619.5px;top:565.5px;width:26px;height:26px;border-radius:50%;background:radial-gradient(circle at 50% 35%,#747474,#666 70%,#5a5a5a);box-shadow:0 1px 1px rgba(0,0,0,.5),inset 0 1px 0 rgba(255,255,255,.18)"></div>
<svg style="left:1619.5px;top:565.5px" width="26" height="26" viewBox="-13 -13 26 26"><path d="M-4 -7L7 0L-4 7z" fill="#d4d4d4"/></svg>
<div style="left:1651.5px;top:565.5px;width:26px;height:26px;border-radius:50%;background:radial-gradient(circle at 50% 35%,#747474,#666 70%,#5a5a5a);box-shadow:0 1px 1px rgba(0,0,0,.5),inset 0 1px 0 rgba(255,255,255,.18)"></div>
<svg style="left:1651.5px;top:565.5px" width="26" height="26" viewBox="-13 -13 26 26"><path d="M0 -5.500v11L7.500 0zM-7 -5.500v11L.5 0z" fill="#d4d4d4"/></svg>
<div style="left:1683.5px;top:565.5px;width:26px;height:26px;border-radius:50%;background:radial-gradient(circle at 50% 35%,#747474,#666 70%,#5a5a5a);box-shadow:0 1px 1px rgba(0,0,0,.5),inset 0 1px 0 rgba(255,255,255,.18)"></div>
<svg style="left:1683.5px;top:565.5px" width="26" height="26" viewBox="-13 -13 26 26"><path d="M5 -5h-2.200v10h2.200zM-5 -5.500v11L3 0z" fill="#d4d4d4"/></svg>
<div style="left:1735px;top:568px;width:64px;height:22px;background:#585858;border:1px solid #3a3a3a;border-bottom-color:#777;border-right-color:#777"></div>
<span class="t" style="left:1739px;top:572px;font-size:13.5px;color:#f0f0f0">Fit</span>
<div style="left:1782px;top:570px;width:16px;height:18px;background:#505050;border:1px solid #888;border-bottom-color:#333;border-right-color:#333"></div>
<svg style="left:1786px;top:577px" width="8" height="5" viewBox="0 0 8 5"><path d="M0 0h8L4 5z" fill="#f0f0f0"/></svg>
<svg style="left:1829px;top:572px" width="18" height="15" viewBox="0 0 18 15"><path d="M1 5h3.500L9.500 1v13L4.500 10H1z" fill="#cfcfcf"/><path d="M11.500 4.500q2 3 0 6M13.500 2.500q3.500 5 0 10" fill="none" stroke="#bdbdbd" stroke-width="1.2"/></svg>
<div style="left:1853px;top:574px;width:54px;height:8px;background:#2f8fe6;border-radius:4px"></div>
<div style="left:1903px;top:572px;width:5px;height:12px;background:#fff;border-radius:2.5px"></div>
<div style="left:1316px;top:596px;width:604px;height:5px;background:#232426"></div>
<div style="left:0px;top:597px;width:1316px;height:4px;background:#232426"></div>
<svg width="0" height="0" style="left:0;top:0"><defs>
<filter id="tb" x="-5%" y="-5%" width="110%" height="110%"><feGaussianBlur stdDeviation="1.100"/></filter>
<filter id="tb2" x="-5%" y="-5%" width="110%" height="110%"><feGaussianBlur stdDeviation="2.200"/></filter>
<filter id="tn" x="0" y="0" width="100%" height="100%"><feTurbulence type="fractalNoise" baseFrequency=".35" numOctaves="2" seed="4"/><feColorMatrix values="0 0 0 0 0 0 0 0 0 0 0 0 0 0 0 1.800 0 0 0 -.7"/></filter>
<filter id="tnw" x="0" y="0" width="100%" height="100%"><feTurbulence type="fractalNoise" baseFrequency=".09 .11" numOctaves="3" seed="9"/><feColorMatrix values="0 0 0 0 .96 0 0 0 0 1 0 0 0 0 .9 0 4.500 0 0 -2.450"/></filter>
<filter id="tnc" x="0" y="0" width="100%" height="100%"><feTurbulence type="fractalNoise" baseFrequency=".1 .2" numOctaves="2" seed="5"/><feColorMatrix values="0 0 0 0 1 0 0 0 0 1 0 0 0 0 1 0 2.800 0 0 -1.200"/></filter>
<linearGradient id="tg_cac" x1="0" y1="0" x2="0" y2="1"><stop offset="0" stop-color="#7d8ca8"/><stop offset=".2" stop-color="#b4aab0"/><stop offset=".36" stop-color="#eac8ae"/><stop offset=".5" stop-color="#d6a080"/><stop offset=".56" stop-color="#7a5438"/><stop offset="1" stop-color="#5a3a24"/></linearGradient>
<linearGradient id="tg_mw" x1="0" y1="0" x2="1" y2="0"><stop offset="0" stop-color="#0a0c10"/><stop offset=".35" stop-color="#20262e"/><stop offset=".52" stop-color="#6a7078"/><stop offset=".6" stop-color="#9a9aa0"/><stop offset=".7" stop-color="#4a545e"/><stop offset=".85" stop-color="#1c2a32"/><stop offset="1" stop-color="#16242a"/></linearGradient>
<linearGradient id="tg_che" x1="0" y1="0" x2="0" y2="1"><stop offset="0" stop-color="#a08450"/><stop offset=".5" stop-color="#a88c56"/><stop offset="1" stop-color="#705634"/></linearGradient>
<linearGradient id="tg_bam" x1="0" y1="0" x2="1" y2="0"><stop offset="0" stop-color="#0a120c"/><stop offset=".14" stop-color="#1c3020"/><stop offset=".2" stop-color="#6a8470"/><stop offset=".26" stop-color="#142418"/><stop offset=".4" stop-color="#1a2c1e"/><stop offset=".44" stop-color="#7e9a8c"/><stop offset=".56" stop-color="#6a8878"/><stop offset=".6" stop-color="#060a06"/><stop offset=".72" stop-color="#0a100a"/><stop offset=".75" stop-color="#6c8a78"/><stop offset=".86" stop-color="#587464"/><stop offset=".9" stop-color="#16241a"/><stop offset="1" stop-color="#1e3022"/></linearGradient>
<linearGradient id="tg_bird" x1="0" y1="0" x2="0" y2="1"><stop offset="0" stop-color="#7e9cc0"/><stop offset=".3" stop-color="#8aa8c8"/><stop offset=".58" stop-color="#9eb8cc"/><stop offset=".64" stop-color="#5a9838"/><stop offset="1" stop-color="#4c8a34"/></linearGradient>
<linearGradient id="tg_girl" x1="0" y1="0" x2="0" y2="1"><stop offset="0" stop-color="#f2d49a"/><stop offset=".3" stop-color="#f8e6be"/><stop offset=".55" stop-color="#eebc72"/><stop offset=".75" stop-color="#a86a2a"/><stop offset="1" stop-color="#5e3414"/></linearGradient>
<linearGradient id="tg_pr" x1="0" y1="0" x2="0" y2="1"><stop offset="0" stop-color="#2a6cd4"/><stop offset=".3" stop-color="#4c8ee0"/><stop offset=".55" stop-color="#8cc0ec"/><stop offset=".6" stop-color="#5a88d0"/><stop offset=".66" stop-color="#4f9c36"/><stop offset="1" stop-color="#3f8c2a"/></linearGradient>
<linearGradient id="tg_sun" x1="0" y1="0" x2="0" y2="1"><stop offset="0" stop-color="#6a5458"/><stop offset=".14" stop-color="#c8743c"/><stop offset=".24" stop-color="#e88a38"/><stop offset=".32" stop-color="#7a4a38"/><stop offset=".5" stop-color="#8a8890"/><stop offset=".75" stop-color="#6a6468"/><stop offset="1" stop-color="#4a3428"/></linearGradient>
<linearGradient id="tg_wh" x1="0" y1="0" x2="0" y2="1"><stop offset="0" stop-color="#f4d098"/><stop offset=".25" stop-color="#dc9848"/><stop offset=".6" stop-color="#c87c34"/><stop offset="1" stop-color="#a05a22"/></linearGradient>
<linearGradient id="tg_wh2" x1="0" y1="0" x2="0" y2="1"><stop offset="0" stop-color="#e0b070"/><stop offset=".3" stop-color="#c89050"/><stop offset=".7" stop-color="#b47c38"/><stop offset="1" stop-color="#8e5c26"/></linearGradient>
</defs></svg>
<div style="left:1px;top:601px;width:1918px;height:49px;background:linear-gradient(#5e5e5e,#3f3f3f);border-radius:5px 5px 0 0;box-shadow:inset 0 1px 0 #6a6a6a"></div>
<div style="left:20px;top:611px;width:3px;height:3px;background:#dadada;border-radius:1px"></div>
<div style="left:26px;top:611px;width:12px;height:3px;background:#dadada;border-radius:1px"></div>
<div style="left:20px;top:618px;width:3px;height:3px;background:#dadada;border-radius:1px"></div>
<div style="left:26px;top:618px;width:12px;height:3px;background:#dadada;border-radius:1px"></div>
<div style="left:20px;top:625px;width:3px;height:3px;background:#dadada;border-radius:1px"></div>
<div style="left:26px;top:625px;width:12px;height:3px;background:#dadada;border-radius:1px"></div>
<span class="t tl" style="left:-31.0px;width:120px;">Menu</span>
<div style="left:77px;top:608px;width:1px;height:37px;background:#3a3a3a"></div>
<div style="left:78px;top:608px;width:1px;height:37px;background:#5c5c5c"></div>
<div style="left:119px;top:617.5px;width:17px;height:2.6px;background:#dadada;border-radius:1px"></div>
<div style="left:126.2px;top:610px;width:2.6px;height:17px;background:#dadada;border-radius:1px"></div>
<span class="t tl" style="left:66.5px;width:120px;">Append</span>
<svg style="left:166px;top:613px" width="20" height="11" viewBox="0 0 20 11"><path d="M1.500 2L10 8.200L18.500 2" fill="none" stroke="#dadada" stroke-width="2.800" stroke-linejoin="miter"/></svg>
<span class="t tl" style="left:115.5px;width:120px;">Insert</span>
<div style="left:216px;top:617.2px;width:18px;height:3px;background:#dadada;border-radius:1.500px"></div>
<span class="t tl" style="left:164.5px;width:120px;">Delete</span>
<svg style="left:264px;top:609px" width="20" height="20" viewBox="0 0 20 20"><g transform="rotate(-45 10 10)"><rect x="5" y="1.500" width="10" height="17" rx="1.200" fill="#dadada"/><rect x="7" y="8" width="6" height="1.300" fill="#555"/><rect x="7" y="11" width="6" height="1.300" fill="#555"/></g></svg>
<span class="t tl" style="left:213.5px;width:120px;">Split</span>
<div style="left:322px;top:608px;width:1px;height:37px;background:#3a3a3a"></div>
<div style="left:323px;top:608px;width:1px;height:37px;background:#5c5c5c"></div>
<svg style="left:363px;top:611px" width="17.500" height="17" viewBox="0 0 19 19"><path d="M2.500 1.200H17.800V16.500" fill="none" stroke="#dadada" stroke-width="1.800"/><rect x="1" y="6" width="12" height="12" fill="#dadada"/></svg>
<span class="t tl" style="left:311.5px;width:120px;">Resize</span>
<svg style="left:411px;top:609px" width="19" height="20" viewBox="0 0 19 20"><path d="M1.500 1.500H9.500V9.500H17.500V19H1.500z" fill="#dadada"/><rect x="10.800" y="11.500" width="4.500" height="5" fill="#4a4a4a"/><path d="M11 2.500Q15.500 3 16 7.500" fill="none" stroke="#dadada" stroke-width="1.300"/><path d="M14 6.500L16.200 9L18 6z" fill="#dadada"/></svg>
<span class="t tl" style="left:360.5px;width:120px;">Rotate</span>
<svg style="left:460px;top:609px" width="20" height="20" viewBox="0 0 20 20"><path d="M4.500 1V15.500H19" fill="none" stroke="#dadada" stroke-width="2.200"/><path d="M1 4.500H15.500V13" fill="none" stroke="#dadada" stroke-width="2.200"/><path d="M6.500 13.500L18 2" stroke="#dadada" stroke-width="1.600"/><path d="M13 18.300h5" stroke="#dadada" stroke-width="1.200"/></svg>
<span class="t tl" style="left:409.5px;width:120px;">Crop</span>
<svg style="left:509px;top:610px" width="20" height="18" viewBox="0 0 20 18"><path d="M1 6h3.500L11 1v16L4.500 12H1z" fill="#dadada"/><path d="M13.500 6q2 3 0 6M16 3.500q3.500 5.500 0 11" fill="none" stroke="#dadada" stroke-width="1.400"/></svg>
<span class="t tl" style="left:458.5px;width:120px;">Volume</span>
<span class="t" style="left:558px;top:607.5px;width:20px;text-align:center;font-family:'Liberation Serif',serif;font-size:24.5px;color:#dadada">T</span>
<span class="t tl" style="left:507.5px;width:120px;">Add Text</span>
<svg style="left:606px;top:609px" width="20" height="20" viewBox="0 0 20 20"><circle cx="8" cy="8" r="6.300" fill="#8a8a8a" stroke="#dadada" stroke-width="1.500"/><circle cx="12" cy="12" r="6.300" fill="rgba(190,190,190,.55)" stroke="#dadada" stroke-width="1.500"/></svg>
<span class="t tl" style="left:557.0px;width:120px;">Add Filter</span>
<div style="left:665px;top:608px;width:1px;height:37px;background:#3a3a3a"></div>
<div style="left:666px;top:608px;width:1px;height:37px;background:#5c5c5c"></div>
<svg style="left:705px;top:610px" width="18" height="18" viewBox="0 0 18 18"><rect x="0" y="0" width="18" height="18" fill="#7e7e7e"/><path d="M0 0L18 18" stroke="#555" stroke-width="1"/><path d="M4 10h5M9 7.500h5" stroke="#505050" stroke-width="1.200"/></svg>
<span class="t tl" style="left:645.0px;width:140px;color:#707070;text-shadow:none;-webkit-text-stroke:0">Transition Settings</span>
<div style="left:1858px;top:615px;width:55px;height:21px;background:linear-gradient(#777,#5c5c5c);border-radius:3px;box-shadow:0 1px 1px rgba(0,0,0,.4),inset 0 1px 0 #8a8a8a"></div>
<div style="left:1885px;top:616px;width:1px;height:19px;background:#4a4a4a"></div>
<svg style="left:1863px;top:616px" width="18" height="18" viewBox="0 0 18 18"><circle cx="7" cy="7" r="5.300" fill="none" stroke="#eee" stroke-width="1.500"/><path d="M4 7h6" stroke="#eee" stroke-width="1.600"/><path d="M11 11l4.500 4.500" stroke="#eee" stroke-width="2.200" stroke-linecap="round"/></svg>
<svg style="left:1889.5px;top:616px" width="18" height="18" viewBox="0 0 18 18"><circle cx="7" cy="7" r="5.300" fill="none" stroke="#eee" stroke-width="1.500"/><path d="M4 7h6" stroke="#eee" stroke-width="1.600"/><path d="M7 4v6" stroke="#eee" stroke-width="1.600"/><path d="M11 11l4.500 4.500" stroke="#eee" stroke-width="2.200" stroke-linecap="round"/></svg>
<div style="left:0px;top:650px;width:1920px;height:25px;background:#323335"></div>
<div style="left:93px;top:674px;width:1826px;height:1px;background:#57585a"></div>
<div style="left:93px;top:660px;width:1px;height:15px;background:#5c5d5f"></div>
<span class="t rl" style="left:95px;top:657px;">00:00:00:00</span>
<div style="left:141px;top:672px;width:1px;height:3px;background:#4c4d4f"></div>
<div style="left:190px;top:668px;width:1px;height:7px;background:#505153"></div>
<div style="left:238px;top:672px;width:1px;height:3px;background:#4c4d4f"></div>
<div style="left:287px;top:660px;width:1px;height:15px;background:#5c5d5f"></div>
<span class="t rl" style="left:289px;top:657px;">00:00:08:00</span>
<div style="left:335px;top:672px;width:1px;height:3px;background:#4c4d4f"></div>
<div style="left:384px;top:668px;width:1px;height:7px;background:#505153"></div>
<div style="left:432px;top:672px;width:1px;height:3px;background:#4c4d4f"></div>
<div style="left:481px;top:660px;width:1px;height:15px;background:#5c5d5f"></div>
<span class="t rl" style="left:483px;top:657px;">00:00:16:00</span>
<div style="left:529px;top:672px;width:1px;height:3px;background:#4c4d4f"></div>
<div style="left:578px;top:668px;width:1px;height:7px;background:#505153"></div>
<div style="left:626px;top:672px;width:1px;height:3px;background:#4c4d4f"></div>
<div style="left:675px;top:660px;width:1px;height:15px;background:#5c5d5f"></div>
<span class="t rl" style="left:677px;top:657px;">00:00:24:00</span>
<div style="left:723px;top:672px;width:1px;height:3px;background:#4c4d4f"></div>
<div style="left:772px;top:668px;width:1px;height:7px;background:#505153"></div>
<div style="left:820px;top:672px;width:1px;height:3px;background:#4c4d4f"></div>
<div style="left:869px;top:660px;width:1px;height:15px;background:#5c5d5f"></div>
<span class="t rl" style="left:871px;top:657px;">00:00:32:00</span>
<div style="left:917px;top:672px;width:1px;height:3px;background:#4c4d4f"></div>
<div style="left:966px;top:668px;width:1px;height:7px;background:#505153"></div>
<div style="left:1014px;top:672px;width:1px;height:3px;background:#4c4d4f"></div>
<div style="left:1062px;top:660px;width:1px;height:15px;background:#5c5d5f"></div>
<span class="t rl" style="left:1064px;top:657px;">00:00:40:00</span>
<div style="left:1111px;top:672px;width:1px;height:3px;background:#4c4d4f"></div>
<div style="left:1159px;top:668px;width:1px;height:7px;background:#505153"></div>
<div style="left:1208px;top:672px;width:1px;height:3px;background:#4c4d4f"></div>
<div style="left:1256px;top:660px;width:1px;height:15px;background:#5c5d5f"></div>
<span class="t rl" style="left:1258px;top:657px;">00:00:48:00</span>
<div style="left:1305px;top:672px;width:1px;height:3px;background:#4c4d4f"></div>
<div style="left:1353px;top:668px;width:1px;height:7px;background:#505153"></div>
<div style="left:1402px;top:672px;width:1px;height:3px;background:#4c4d4f"></div>
<div style="left:1450px;top:660px;width:1px;height:15px;background:#5c5d5f"></div>
<span class="t rl" style="left:1452px;top:657px;">00:00:56:00</span>
<div style="left:1499px;top:672px;width:1px;height:3px;background:#4c4d4f"></div>
<div style="left:1547px;top:668px;width:1px;height:7px;background:#505153"></div>
<div style="left:1596px;top:672px;width:1px;height:3px;background:#4c4d4f"></div>
<div style="left:1644px;top:660px;width:1px;height:15px;background:#5c5d5f"></div>
<span class="t rl" style="left:1646px;top:657px;">00:01:04:00</span>
<div style="left:1693px;top:672px;width:1px;height:3px;background:#4c4d4f"></div>
<div style="left:1741px;top:668px;width:1px;height:7px;background:#505153"></div>
<div style="left:1790px;top:672px;width:1px;height:3px;background:#4c4d4f"></div>
<div style="left:1838px;top:660px;width:1px;height:15px;background:#5c5d5f"></div>
<span class="t rl" style="left:1840px;top:657px;">00:01:12:00</span>
<div style="left:1887px;top:672px;width:1px;height:3px;background:#4c4d4f"></div>
<div style="left:0px;top:675px;width:1905px;height:361px;background:#323335"></div>
<div style="left:0px;top:1036px;width:1920px;height:44px;background:#252628"></div>
<div style="left:1905px;top:675px;width:15px;height:361px;background:#29292b"></div>
<div style="left:91px;top:675px;width:2px;height:361px;background:#2a2a2c"></div>
<div style="left:0px;top:650px;width:2px;height:386px;background:#26262a"></div>
<div style="left:0px;top:718px;width:1905px;height:1px;background:#29292b"></div>
<span class="t th" style="left:4px;top:685.5px;">V6</span>
<div class="ib" style="left:24px;top:685.0px;width:16px;height:16px;"><svg style="left:0;top:0" width="16" height="16" viewBox="0 0 16 16"><path d="M2 5.500h3v5H2z" fill="#dcdcdc"/><path d="M5.500 5.500L9 2.500v11L5.500 10.500z" fill="#dcdcdc"/><path d="M10.500 5.500q1.500 2.500 0 5M12.300 3.800q2.800 4.200 0 8.400" fill="none" stroke="#e0e0e0" stroke-width="1.100"/></svg></div>
<div class="ib" style="left:48px;top:685.0px;width:16px;height:16px;"><svg style="left:0;top:0" width="16" height="16" viewBox="0 0 16 16"><path d="M.8 8Q8 1.300 15.200 8Q8 14.700 .8 8z" fill="#dcdcdc"/><circle cx="8" cy="8" r="2.700" fill="#6a6a6a"/><circle cx="8" cy="8" r="1.100" fill="#dcdcdc"/></svg></div>
<div class="ib" style="left:72px;top:685.0px;width:16px;height:16px;"><svg style="left:0;top:0" width="16" height="16" viewBox="0 0 16 16"><rect x="2" y="7.500" width="9.300" height="6.200" fill="#dcdcdc"/><path d="M6.600 9V12.300" stroke="#6a6a6a" stroke-width="1.300"/><path d="M8.300 7.500V5.300q0-2.800 2.800-2.800q2.800 0 2.800 2.800V7" fill="none" stroke="#dcdcdc" stroke-width="1.500"/></svg></div>
<div style="left:2px;top:719px;width:89px;height:50px;background:#535456"></div>
<div style="left:93px;top:719px;width:1812px;height:50px;background:#535456"></div>
<div style="left:0px;top:769px;width:1905px;height:1px;background:#29292b"></div>
<span class="t th" style="left:4px;top:736.5px;">V5</span>
<div class="ib" style="left:24px;top:736.0px;width:16px;height:16px;box-shadow:0 0 0 1px #303032"><svg style="left:0;top:0" width="16" height="16" viewBox="0 0 16 16"><path d="M2 5.500h3v5H2z" fill="#dcdcdc"/><path d="M5.500 5.500L9 2.500v11L5.500 10.500z" fill="#dcdcdc"/><path d="M10.500 5.500q1.500 2.500 0 5M12.300 3.800q2.800 4.200 0 8.400" fill="none" stroke="#e0e0e0" stroke-width="1.100"/></svg></div>
<div class="ib" style="left:48px;top:736.0px;width:16px;height:16px;box-shadow:0 0 0 1px #303032"><svg style="left:0;top:0" width="16" height="16" viewBox="0 0 16 16"><path d="M.8 8Q8 1.300 15.200 8Q8 14.700 .8 8z" fill="#dcdcdc"/><circle cx="8" cy="8" r="2.700" fill="#6a6a6a"/><circle cx="8" cy="8" r="1.100" fill="#dcdcdc"/></svg></div>
<div class="ib" style="left:72px;top:736.0px;width:16px;height:16px;box-shadow:0 0 0 1px #303032"><svg style="left:0;top:0" width="16" height="16" viewBox="0 0 16 16"><rect x="2" y="7.500" width="9.300" height="6.200" fill="#dcdcdc"/><path d="M6.600 9V12.300" stroke="#6a6a6a" stroke-width="1.300"/><path d="M8.300 7.500V5.300q0-2.800 2.800-2.800q2.800 0 2.800 2.800V7" fill="none" stroke="#dcdcdc" stroke-width="1.500"/></svg></div>
<div style="left:0px;top:820px;width:1905px;height:1px;background:#29292b"></div>
<span class="t th" style="left:4px;top:787.5px;">V4</span>
<div class="ib" style="left:24px;top:787.0px;width:16px;height:16px;"><svg style="left:0;top:0" width="16" height="16" viewBox="0 0 16 16"><path d="M2 5.500h3v5H2z" fill="#dcdcdc"/><path d="M5.500 5.500L9 2.500v11L5.500 10.500z" fill="#dcdcdc"/><path d="M10.500 5.500q1.500 2.500 0 5M12.300 3.800q2.800 4.200 0 8.400" fill="none" stroke="#e0e0e0" stroke-width="1.100"/></svg></div>
<div class="ib" style="left:48px;top:787.0px;width:16px;height:16px;"><svg style="left:0;top:0" width="16" height="16" viewBox="0 0 16 16"><path d="M.8 8Q8 1.300 15.200 8Q8 14.700 .8 8z" fill="#dcdcdc"/><circle cx="8" cy="8" r="2.700" fill="#6a6a6a"/><circle cx="8" cy="8" r="1.100" fill="#dcdcdc"/></svg></div>
<div class="ib" style="left:72px;top:787.0px;width:16px;height:16px;"><svg style="left:0;top:0" width="16" height="16" viewBox="0 0 16 16"><rect x="2" y="7.500" width="9.300" height="6.200" fill="#dcdcdc"/><path d="M6.600 9V12.300" stroke="#6a6a6a" stroke-width="1.300"/><path d="M8.300 7.500V5.300q0-2.800 2.800-2.800q2.800 0 2.800 2.800V7" fill="none" stroke="#dcdcdc" stroke-width="1.500"/></svg></div>
<div style="left:0px;top:871px;width:1905px;height:1px;background:#29292b"></div>
<span class="t th" style="left:4px;top:838.5px;">V3</span>
<div class="ib" style="left:24px;top:838.0px;width:16px;height:16px;"><svg style="left:0;top:0" width="16" height="16" viewBox="0 0 16 16"><path d="M2 5.500h3v5H2z" fill="#dcdcdc"/><path d="M5.500 5.500L9 2.500v11L5.500 10.500z" fill="#dcdcdc"/><path d="M10.500 5.500q1.500 2.500 0 5M12.300 3.800q2.800 4.200 0 8.400" fill="none" stroke="#e0e0e0" stroke-width="1.100"/></svg></div>
<div class="ib" style="left:48px;top:838.0px;width:16px;height:16px;"><svg style="left:0;top:0" width="16" height="16" viewBox="0 0 16 16"><path d="M.8 8Q8 1.300 15.200 8Q8 14.700 .8 8z" fill="#dcdcdc"/><circle cx="8" cy="8" r="2.700" fill="#6a6a6a"/><circle cx="8" cy="8" r="1.100" fill="#dcdcdc"/></svg></div>
<div class="ib" style="left:72px;top:838.0px;width:16px;height:16px;"><svg style="left:0;top:0" width="16" height="16" viewBox="0 0 16 16"><rect x="2" y="7.500" width="9.300" height="6.200" fill="#dcdcdc"/><path d="M6.600 9V12.300" stroke="#6a6a6a" stroke-width="1.300"/><path d="M8.300 7.500V5.300q0-2.800 2.800-2.800q2.800 0 2.800 2.800V7" fill="none" stroke="#dcdcdc" stroke-width="1.500"/></svg></div>
<div style="left:0px;top:922px;width:1905px;height:1px;background:#29292b"></div>
<span class="t th" style="left:4px;top:889.5px;">V2</span>
<div class="ib" style="left:24px;top:889.0px;width:16px;height:16px;"><svg style="left:0;top:0" width="16" height="16" viewBox="0 0 16 16"><path d="M2 5.500h3v5H2z" fill="#dcdcdc"/><path d="M5.500 5.500L9 2.500v11L5.500 10.500z" fill="#dcdcdc"/><path d="M10.500 5.500q1.500 2.500 0 5M12.300 3.800q2.800 4.200 0 8.400" fill="none" stroke="#e0e0e0" stroke-width="1.100"/></svg></div>
<div class="ib" style="left:48px;top:889.0px;width:16px;height:16px;"><svg style="left:0;top:0" width="16" height="16" viewBox="0 0 16 16"><path d="M.8 8Q8 1.300 15.200 8Q8 14.700 .8 8z" fill="#dcdcdc"/><circle cx="8" cy="8" r="2.700" fill="#6a6a6a"/><circle cx="8" cy="8" r="1.100" fill="#dcdcdc"/></svg></div>
<div class="ib" style="left:72px;top:889.0px;width:16px;height:16px;"><svg style="left:0;top:0" width="16" height="16" viewBox="0 0 16 16"><rect x="2" y="7.500" width="9.300" height="6.200" fill="#dcdcdc"/><path d="M6.600 9V12.300" stroke="#6a6a6a" stroke-width="1.300"/><path d="M8.300 7.500V5.300q0-2.800 2.800-2.800q2.800 0 2.800 2.800V7" fill="none" stroke="#dcdcdc" stroke-width="1.500"/></svg></div>
<div style="left:0px;top:973px;width:1905px;height:1px;background:#29292b"></div>
<span class="t th" style="left:4px;top:940.5px;">V1</span>
<div class="ib" style="left:24px;top:940.0px;width:16px;height:16px;"><svg style="left:0;top:0" width="16" height="16" viewBox="0 0 16 16"><path d="M2 5.500h3v5H2z" fill="#dcdcdc"/><path d="M5.500 5.500L9 2.500v11L5.500 10.500z" fill="#dcdcdc"/><path d="M10.500 5.500q1.500 2.500 0 5M12.300 3.800q2.800 4.200 0 8.400" fill="none" stroke="#e0e0e0" stroke-width="1.100"/></svg></div>
<div class="ib" style="left:48px;top:940.0px;width:16px;height:16px;"><svg style="left:0;top:0" width="16" height="16" viewBox="0 0 16 16"><path d="M.8 8Q8 1.300 15.200 8Q8 14.700 .8 8z" fill="#dcdcdc"/><circle cx="8" cy="8" r="2.700" fill="#6a6a6a"/><circle cx="8" cy="8" r="1.100" fill="#dcdcdc"/></svg></div>
<div class="ib" style="left:72px;top:940.0px;width:16px;height:16px;"><svg style="left:0;top:0" width="16" height="16" viewBox="0 0 16 16"><rect x="2" y="7.500" width="9.300" height="6.200" fill="#dcdcdc"/><path d="M6.600 9V12.300" stroke="#6a6a6a" stroke-width="1.300"/><path d="M8.300 7.500V5.300q0-2.800 2.800-2.800q2.800 0 2.800 2.800V7" fill="none" stroke="#dcdcdc" stroke-width="1.500"/></svg></div>
<div style="left:0px;top:1004px;width:1905px;height:1px;background:#29292b"></div>
<span class="t th" style="left:4px;top:981.5px;">A1</span>
<div class="ib" style="left:24px;top:981.0px;width:16px;height:16px;"><svg style="left:0;top:0" width="16" height="16" viewBox="0 0 16 16"><path d="M2 5.500h3v5H2z" fill="#dcdcdc"/><path d="M5.500 5.500L9 2.500v11L5.500 10.500z" fill="#dcdcdc"/><path d="M10.500 5.500q1.500 2.500 0 5M12.300 3.800q2.800 4.200 0 8.400" fill="none" stroke="#e0e0e0" stroke-width="1.100"/></svg></div>
<div class="ib" style="left:48px;top:981.0px;width:16px;height:16px;"><svg style="left:0;top:0" width="16" height="16" viewBox="0 0 16 16"><rect x="2" y="7.500" width="9.300" height="6.200" fill="#dcdcdc"/><path d="M6.600 9V12.300" stroke="#6a6a6a" stroke-width="1.300"/><path d="M8.300 7.500V5.300q0-2.800 2.800-2.800q2.800 0 2.800 2.800V7" fill="none" stroke="#dcdcdc" stroke-width="1.500"/></svg></div>
<div style="left:0px;top:1035px;width:1905px;height:1px;background:#29292b"></div>
<span class="t th" style="left:4px;top:1012.5px;">A2</span>
<div class="ib" style="left:24px;top:1012.0px;width:16px;height:16px;"><svg style="left:0;top:0" width="16" height="16" viewBox="0 0 16 16"><path d="M2 5.500h3v5H2z" fill="#dcdcdc"/><path d="M5.500 5.500L9 2.500v11L5.500 10.500z" fill="#dcdcdc"/><path d="M10.500 5.500q1.500 2.500 0 5M12.300 3.800q2.800 4.200 0 8.400" fill="none" stroke="#e0e0e0" stroke-width="1.100"/></svg></div>
<div class="ib" style="left:48px;top:1012.0px;width:16px;height:16px;"><svg style="left:0;top:0" width="16" height="16" viewBox="0 0 16 16"><rect x="2" y="7.500" width="9.300" height="6.200" fill="#dcdcdc"/><path d="M6.600 9V12.300" stroke="#6a6a6a" stroke-width="1.300"/><path d="M8.300 7.500V5.300q0-2.800 2.800-2.800q2.800 0 2.800 2.800V7" fill="none" stroke="#dcdcdc" stroke-width="1.500"/></svg></div>
<div style="left:93px;top:719px;width:612px;height:50px;background:#2db8e0;border:2px solid #fff"></div><svg style="left:99px;top:725px" width="68" height="38" viewBox="0 0 68 38" preserveAspectRatio="none"><rect width="68" height="38" fill="url(#tg_cac)"/><g filter="url(#tb)"><ellipse cx="20" cy="5" rx="22" ry="4" fill="#6a7890" opacity=".8"/><ellipse cx="10" cy="13" rx="8" ry="2.500" fill="#6a8aa8" opacity=".8"/><ellipse cx="50" cy="6" rx="16" ry="3.500" fill="#8a90a0" opacity=".7"/><ellipse cx="45" cy="12" rx="14" ry="3" fill="#f4dcc8" opacity=".9"/><path d="M16 38C17 30 18 24 20 17C18 14 20 8 23 9C24 5 27 2 29 6C32 4 35 7 33 11C36 10 36 15 33 17C34 24 35 30 38 38z" fill="#2c1c10"/><path d="M55 30C55 24 56 18 58 15C60 12 62 16 61 20C62 24 62 28 63 32z" fill="#33200f"/><path d="M0 26C6 24 12 25 16 27V38H0z" fill="#4a2e1c"/><path d="M64 20L68 17V34H65z" fill="#2c1c10"/></g><rect width="68" height="38" filter="url(#tn)" opacity=".35"/></svg><svg style="left:632px;top:725px" width="68" height="38" viewBox="0 0 68 38" preserveAspectRatio="none"><rect width="68" height="38" fill="#14181c"/><rect x="-10" width="88" height="38" fill="url(#tg_mw)" transform="skewX(-14) translate(8 0)"/><g filter="url(#tb)"><ellipse cx="42" cy="36" rx="4" ry="6" fill="#e08838"/><ellipse cx="42" cy="33" rx="8" ry="7" fill="#b86a38" opacity=".45"/><path d="M0 0H5L7 10L10 2L13 0H16L18 4L21 0H26L29 10L31 18L33 27L37 31L39 38H0z" fill="#050607" opacity=".93"/><path d="M6 12L9 22M17 6L15 20" stroke="#4a5058" stroke-width="1.800" fill="none" opacity=".7"/><path d="M68 10L62 12L58 18L54 22L52 30L47 31L46 38H68z" fill="#050607"/><path d="M30 38L35 29L40 38z" fill="#050607"/><rect y="33" width="68" height="5" fill="#050607" opacity=".8"/></g></svg><span class="t cl" style="left:162.5px;top:723px;">10.mp4</span>
<div class="tr" style="left:707px;top:720px;width:79px;height:48px;"></div>
<div class="clip" style="left:788px;top:720px;width:25px;height:48px;"></div><svg style="left:788px;top:725px" width="24" height="38" viewBox="0 0 24 38" preserveAspectRatio="none"><rect width="24" height="38" fill="#4c9a3a"/><rect x="4" width="1.500" height="38" fill="#357a2c"/><g filter="url(#tb)"><circle cx="2" cy="10" r="3" fill="#f48ab0"/><circle cx="2" cy="33" r="4" fill="#f470a4"/><circle cx="13" cy="26" r="4.500" fill="#f47aaa"/><circle cx="20" cy="30" r="4.500" fill="#f88ab4"/><circle cx="18" cy="18" r="3.500" fill="#f070a0"/><circle cx="10" cy="11" r="2.500" fill="#e84a80"/><circle cx="17" cy="7" r="2" fill="#e85088"/><circle cx="8" cy="19" r="2" fill="#e03a70"/><circle cx="22" cy="4" r="2.500" fill="#f06a9c"/><circle cx="13" cy="3" r="1.800" fill="#d83060"/><circle cx="21" cy="12" r="2" fill="#e0406c"/><circle cx="7" cy="28" r="2.200" fill="#f8a0c0"/></g></svg>
<div class="clip" style="left:1370px;top:720px;width:200px;height:48px;"></div><svg style="left:1380px;top:725px" width="57" height="38" viewBox="0 0 68 38" preserveAspectRatio="none"><rect width="68" height="38" fill="url(#tg_che)"/><g filter="url(#tb)"><path d="M14 4L20 2L32 8L40 12L42 20L36 18L30 24L24 22L20 14z" fill="#c8aa74"/><path d="M18 20L16 28M24 22L26 30M34 20L33 28" stroke="#8a6c40" stroke-width="1.500"/><path d="M14 4L17 8" stroke="#2c2010" stroke-width="2"/><rect y="27" width="68" height="11" fill="#6a5030" opacity=".7"/></g><rect width="68" height="38" filter="url(#tn)" opacity=".4"/></svg><svg style="left:1502px;top:725px" width="56" height="38" viewBox="0 0 68 38" preserveAspectRatio="none"><rect width="68" height="38" fill="url(#tg_che)"/><g filter="url(#tb)"><path d="M34 8L44 12L56 18L62 28L58 36L52 30L46 34L40 36L36 28L40 20z" fill="#d4ba8a"/><path d="M36 8L40 16" stroke="#2a1c0e" stroke-width="2"/><rect width="30" height="38" fill="#8a6c3c" opacity=".4"/></g><rect width="68" height="38" filter="url(#tn)" opacity=".4"/></svg>
<span class="t cl" style="left:1438px;top:723px;">5351717c9014b.mov</span>
<div class="clip" style="left:303px;top:771px;width:592px;height:48px;"></div><svg style="left:308px;top:776px" width="68" height="38" viewBox="0 0 68 38" preserveAspectRatio="none"><rect width="68" height="38" fill="url(#tg_cac)"/><g filter="url(#tb)"><ellipse cx="20" cy="5" rx="22" ry="4" fill="#6a7890" opacity=".8"/><ellipse cx="10" cy="13" rx="8" ry="2.500" fill="#6a8aa8" opacity=".8"/><ellipse cx="50" cy="6" rx="16" ry="3.500" fill="#8a90a0" opacity=".7"/><ellipse cx="45" cy="12" rx="14" ry="3" fill="#f4dcc8" opacity=".9"/><path d="M16 38C17 30 18 24 20 17C18 14 20 8 23 9C24 5 27 2 29 6C32 4 35 7 33 11C36 10 36 15 33 17C34 24 35 30 38 38z" fill="#2c1c10"/><path d="M55 30C55 24 56 18 58 15C60 12 62 16 61 20C62 24 62 28 63 32z" fill="#33200f"/><path d="M0 26C6 24 12 25 16 27V38H0z" fill="#4a2e1c"/><path d="M64 20L68 17V34H65z" fill="#2c1c10"/></g><rect width="68" height="38" filter="url(#tn)" opacity=".35"/></svg><svg style="left:822px;top:776px" width="68" height="38" viewBox="0 0 68 38" preserveAspectRatio="none"><rect width="68" height="38" fill="#14181c"/><rect x="-10" width="88" height="38" fill="url(#tg_mw)" transform="skewX(-14) translate(8 0)"/><g filter="url(#tb)"><ellipse cx="42" cy="36" rx="4" ry="6" fill="#e08838"/><ellipse cx="42" cy="33" rx="8" ry="7" fill="#b86a38" opacity=".45"/><path d="M0 0H5L7 10L10 2L13 0H16L18 4L21 0H26L29 10L31 18L33 27L37 31L39 38H0z" fill="#050607" opacity=".93"/><path d="M6 12L9 22M17 6L15 20" stroke="#4a5058" stroke-width="1.800" fill="none" opacity=".7"/><path d="M68 10L62 12L58 18L54 22L52 30L47 31L46 38H68z" fill="#050607"/><path d="M30 38L35 29L40 38z" fill="#050607"/><rect y="33" width="68" height="5" fill="#050607" opacity=".8"/></g></svg><span class="t cl" style="left:371px;top:774px;">10.mp4</span>
<div class="tr" style="left:897px;top:771px;width:98px;height:48px;"></div>
<div class="clip" style="left:997px;top:771px;width:454px;height:48px;"></div><svg style="left:1010px;top:776px" width="51" height="38" viewBox="0 0 68 38" preserveAspectRatio="none"><rect width="68" height="38" fill="#000"/><rect y="4" width="68" height="29" fill="#d8c884"/><g filter="url(#tb)"><path d="M0 6L24 5L44 10L48 18L30 22L0 20z" fill="#f0ecdc"/><path d="M30 4H48L47 10L34 8z" fill="#a06a4a"/><path d="M24 20L34 16L44 24L32 28z" fill="#e8c450"/><rect y="4" width="4" height="29" fill="#1a140a"/><path d="M4 22L30 24L28 33H4z" fill="#c8b468" opacity=".8"/></g></svg><svg style="left:1387px;top:776px" width="51" height="38" viewBox="0 0 68 38" preserveAspectRatio="none"><rect width="68" height="38" fill="url(#tg_bam)"/><rect width="68" height="5.500" fill="#000"/><rect y="33" width="68" height="5" fill="#000"/></svg><span class="t cl" style="left:1066px;top:774px;">1.mov</span>
<div class="clip" style="left:446px;top:822px;width:412px;height:48px;"></div><svg style="left:451px;top:827px" width="68" height="38" viewBox="0 0 68 38" preserveAspectRatio="none"><rect width="68" height="38" fill="#2450b0"/><rect width="68" height="9" fill="#58b028"/><g filter="url(#tb)"><rect y="8" width="68" height="7" fill="#6a7a58"/><path d="M0 22L30 20L36 24L20 30L0 28z" fill="#6a9ad8"/><path d="M22 38C24 28 34 22 48 20L68 17V38z" fill="#6cb02c"/><path d="M0 10L8 8L18 9L22 14L18 20L10 22L4 18L0 20z" fill="#f4f4f4"/><path d="M22 12L34 9L42 10L44 16L36 20L26 20z" fill="#8a4424"/><path d="M44 8L56 5L68 6V14L60 16L50 17z" fill="#b8804c"/><path d="M8 9L14 8L15 11L10 12z" fill="#3a3a3a"/></g></svg><svg style="left:785px;top:827px" width="68" height="38" viewBox="0 0 68 38" preserveAspectRatio="none"><rect width="68" height="38" fill="#2450b0"/><rect width="68" height="9" fill="#58b028"/><g filter="url(#tb)"><rect y="8" width="68" height="7" fill="#6a7a58"/><path d="M0 22L30 20L36 24L20 30L0 28z" fill="#6a9ad8"/><path d="M22 38C24 28 34 22 48 20L68 17V38z" fill="#6cb02c"/><path d="M0 10L8 8L18 9L22 14L18 20L10 22L4 18L0 20z" fill="#f4f4f4"/><path d="M22 12L34 9L42 10L44 16L36 20L26 20z" fill="#8a4424"/><path d="M44 8L56 5L68 6V14L60 16L50 17z" fill="#b8804c"/><path d="M8 9L14 8L15 11L10 12z" fill="#3a3a3a"/></g></svg><span class="t cl" style="left:515px;top:825px;">56521ce8a4bfb.wmv</span>
<div class="tr" style="left:860px;top:822px;width:19px;height:48px;"></div>
<div class="clip" style="left:881px;top:822px;width:246px;height:48px;"></div><svg style="left:886px;top:827px" width="67" height="38" viewBox="0 0 68 38" preserveAspectRatio="none"><rect width="68" height="38" fill="#2450b0"/><rect width="68" height="9" fill="#58b028"/><g filter="url(#tb)"><rect y="8" width="68" height="9" fill="#6a8a60"/><path d="M0 24L34 20L40 24L30 30L0 30z" fill="#5a8ad0"/><path d="M30 38C32 30 40 24 52 20L68 17V38z" fill="#6cb02c"/><path d="M40 9H68V16L44 18z" fill="#68a838"/><path d="M10 8L20 6L28 8L30 16L24 20L14 20z" fill="#f0f0f0"/><path d="M0 6L8 7L10 18L2 20z" fill="#8a4424"/><path d="M26 12L36 10L42 14L40 19L30 20z" fill="#b06030"/><path d="M32 5L42 6L44 12L36 12z" fill="#f4f4f4"/></g></svg><svg style="left:1055px;top:827px" width="67" height="38" viewBox="0 0 68 38" preserveAspectRatio="none"><rect width="68" height="38" fill="url(#tg_bird)"/><g filter="url(#tb)"><ellipse cx="20" cy="12" rx="18" ry="6" fill="#7090b8" opacity=".5"/><path d="M0 25Q34 20 68 23V38H0z" fill="#5a9a38"/><path d="M33 8L37 16L44 6L40 17L45 19L36 19z" fill="#f8f8f8"/><path d="M55 0L58 0L56 5z" fill="#fff"/></g></svg>
<span class="t cl" style="left:950px;top:825px;">56521ce8a4bfb.wmv</span>
<div class="clip" style="left:94px;top:873px;width:95px;height:48px;"></div><svg style="left:104px;top:878px" width="74" height="38" viewBox="0 0 68 38" preserveAspectRatio="none"><rect width="68" height="38" fill="url(#tg_girl)"/><g filter="url(#tb)"><ellipse cx="22" cy="13" rx="20" ry="8" fill="#fff6dc" opacity=".85"/><ellipse cx="27" cy="17" rx="6" ry="5" fill="#fff0b0" opacity=".9"/><path d="M0 22L10 18L22 24L34 22V38H0z" fill="#9a6a2c" opacity=".8"/><path d="M38 8C38 2 46 1 46 8L45 12L47 14L48 26L46 32H38L37 24L30 24L30 22L38 18z" fill="#d8d49a"/><ellipse cx="42" cy="6" rx="4" ry="5" fill="#8a5430"/><path d="M54 10C54 4 62 3 62 10L61 14L63 16L64 28L62 34H54L53 26z" fill="#d0cc94"/><ellipse cx="58" cy="8" rx="4" ry="5" fill="#7a4828"/><path d="M48 6H52V30H48z" fill="#e8dcc0" opacity=".6"/><path d="M30 30L42 27L52 30L66 29L68 38H28z" fill="#5a1814"/><path d="M34 26L44 36M56 28L62 36" stroke="#c02020" stroke-width="1.500"/><path d="M40 24H50M58 25H66" stroke="#201410" stroke-width="1.800"/></g></svg>
<div style="left:94px;top:873px;width:95px;height:48px;overflow:hidden"><span class="t cl" style="left:69px;top:3px;">Nipic_</span></div>
<div class="clip" style="left:682px;top:873px;width:596px;height:48px;"></div><svg style="left:687px;top:878px" width="67" height="38" viewBox="0 0 68 38" preserveAspectRatio="none"><rect width="68" height="38" fill="url(#tg_pr)"/><rect width="68" height="23" filter="url(#tnc)" opacity=".9"/><g filter="url(#tb)"><path d="M0 30L30 29L44 26L46 28L34 32L0 33z" fill="#2a70d8"/><path d="M44 26L56 25L66 26V29L46 29z" fill="#c8a868"/><rect x="50" y="30" width="12" height="5" fill="#c8b8a8"/><path d="M50 30L56 28L62 30z" fill="#a84030"/></g></svg><svg style="left:1205px;top:878px" width="68" height="38" viewBox="0 0 68 38" preserveAspectRatio="none"><rect width="68" height="38" fill="url(#tg_pr)"/><rect width="68" height="23" filter="url(#tnc)" opacity=".9"/><g filter="url(#tb)"><path d="M0 30L30 29L44 26L46 28L34 32L0 33z" fill="#2a70d8"/><path d="M44 26L56 25L66 26V29L46 29z" fill="#c8a868"/><rect x="50" y="30" width="12" height="5" fill="#c8b8a8"/><path d="M50 30L56 28L62 30z" fill="#a84030"/></g></svg><span class="t cl" style="left:751px;top:876px;">5a57a4a1477a9.mp4</span>
<div class="tr" style="left:1280px;top:873px;width:100px;height:48px;"></div>
<div class="clip" style="left:1382px;top:873px;width:523px;height:48px;"></div><svg style="left:1387px;top:878px" width="67" height="38" viewBox="0 0 68 38" preserveAspectRatio="none"><rect width="68" height="38" fill="url(#tg_sun)"/><g filter="url(#tb)"><ellipse cx="34" cy="8" rx="6" ry="2.500" fill="#fff0a0"/><ellipse cx="34" cy="8" rx="16" ry="4" fill="#ffa838" opacity=".6"/><path d="M0 12L8 10L14 16L18 26L24 38H0z" fill="#3a2418"/><path d="M68 4L60 8L56 14L62 18L68 20z" fill="#3c2a20"/><path d="M22 20L40 16L60 20L66 30L40 34L26 30z" fill="#a8a8b0" opacity=".8"/><path d="M30 20L38 18L44 22L36 24z" fill="#3a2c28"/><path d="M44 28L56 26L60 30L48 32z" fill="#3a2c28"/><path d="M0 32L68 30V38H0z" fill="#4a3020" opacity=".8"/></g></svg>
<span class="t cl" style="left:1452px;top:876px;">48 sunrise -12.mov</span>
<div class="clip" style="left:154px;top:924px;width:363px;height:48px;"></div><svg style="left:159px;top:929px" width="67" height="38" viewBox="0 0 68 38" preserveAspectRatio="none"><rect width="68" height="38" fill="#6a9448"/><g filter="url(#tb)"><rect width="68" height="8" fill="#5a8a48"/><path d="M36 0L68 2V8L44 7z" fill="#8a7a80" opacity=".6"/><rect y="7" width="68" height="15" fill="#d6301a"/><rect y="19" width="68" height="8" fill="#8a9a30"/><path d="M0 19L6 17L10 20L16 16L22 21L28 17L34 20L40 17L46 21L52 18L58 20V24H0z" fill="#cc3a1c"/><rect y="27" width="68" height="11" fill="#f2b80a"/><path d="M0 28L8 25L14 28L24 26L34 28L44 25L54 28L62 25L68 26V31H0z" fill="#f4c010"/><path d="M61 3L68 1V25L63 23z" fill="#4e4250"/></g><rect y="6" width="68" height="32" filter="url(#tn)" opacity=".3"/></svg><svg style="left:446px;top:929px" width="67" height="38" viewBox="0 0 68 38" preserveAspectRatio="none"><rect width="68" height="38" fill="#6a9448"/><g filter="url(#tb)"><rect width="68" height="8" fill="#5a8a48"/><path d="M36 0L68 2V8L44 7z" fill="#8a7a80" opacity=".6"/><rect y="7" width="68" height="15" fill="#d6301a"/><rect y="19" width="68" height="8" fill="#8a9a30"/><path d="M0 19L6 17L10 20L16 16L22 21L28 17L34 20L40 17L46 21L52 18L58 20V24H0z" fill="#cc3a1c"/><rect y="27" width="68" height="11" fill="#f2b80a"/><path d="M0 28L8 25L14 28L24 26L34 28L44 25L54 28L62 25L68 26V31H0z" fill="#f4c010"/><path d="M61 3L68 1V25L63 23z" fill="#4e4250"/></g><rect y="6" width="68" height="32" filter="url(#tn)" opacity=".3"/></svg>
<span class="t cl" style="left:222px;top:927px;">5729aec495689.MOV</span>
<div class="tr" style="left:519px;top:924px;width:34px;height:48px;"></div>
<div class="clip" style="left:555px;top:924px;width:176px;height:48px;"></div><svg style="left:560px;top:929px" width="67" height="38" viewBox="0 0 68 38" preserveAspectRatio="none"><rect width="68" height="38" fill="#2e4c18"/><rect width="68" height="38" filter="url(#tnw)"/><rect width="68" height="38" filter="url(#tn)" opacity=".55"/><rect x="58" width="3" height="38" fill="#1a260e" opacity=".8"/></svg><svg style="left:659px;top:929px" width="67" height="38" viewBox="0 0 68 38" preserveAspectRatio="none"><rect width="68" height="38" fill="#324f18"/><rect width="68" height="38" filter="url(#tnw)" transform="translate(68 0) scale(-1 1)"/><rect width="68" height="38" filter="url(#tn)" opacity=".55"/><rect x="50" width="3" height="38" fill="#1a260e" opacity=".8"/></svg>
<span class="t cl" style="left:618px;top:927px;">55edc437a46bc.mov</span>
<div class="clip" style="left:1075px;top:924px;width:665px;height:48px;"></div><svg style="left:1080px;top:929px" width="67" height="38" viewBox="0 0 68 38" preserveAspectRatio="none"><rect width="68" height="38" fill="url(#tg_wh)"/><g filter="url(#tb2)"><ellipse cx="36" cy="2" rx="26" ry="7" fill="#fff"/><ellipse cx="36" cy="6" rx="14" ry="5" fill="#fff8e0"/><path d="M0 0L6 2L14 10L24 18L30 24L18 22L6 14L0 12z" fill="#b0683a"/><ellipse cx="32" cy="32" rx="5" ry="3" fill="#ffd850" opacity=".8"/></g></svg><svg style="left:1668px;top:929px" width="67" height="38" viewBox="0 0 68 38" preserveAspectRatio="none"><rect width="68" height="38" fill="url(#tg_wh2)"/><g filter="url(#tb2)"><path d="M0 0H18L24 6L10 10L0 14z" fill="#3a2410"/><ellipse cx="42" cy="4" rx="16" ry="8" fill="#fff"/><ellipse cx="44" cy="10" rx="22" ry="6" fill="#ffe8b0" opacity=".8"/><ellipse cx="12" cy="12" rx="4" ry="3" fill="#b89a30"/><ellipse cx="30" cy="30" rx="4" ry="3" fill="#f0c860" opacity=".6"/></g><rect y="12" width="68" height="26" filter="url(#tn)" opacity=".25"/></svg>
<span class="t cl" style="left:1144px;top:927px;">Wheat field.mov</span>
<div class="aclip" style="left:93px;top:975px;width:786px;height:28px;"></div>
<span class="t cl" style="left:95px;top:978px;top:978px">14.mp4</span>
<div class="aclip" style="left:777px;top:1006px;width:390px;height:28px;"></div>
<span class="t cl" style="left:779px;top:1009px;top:1009px">5345 b5f.mp4</span>
<div class="tr" style="left:1168px;top:1006px;width:60px;height:28px;"></div>
<div class="aclip" style="left:1229px;top:1006px;width:676px;height:28px;"></div>
<span class="t cl" style="left:1232px;top:1009px;top:1009px">5345 b5f.mp4</span>
<div style="left:250px;top:656px;width:1px;height:410px;background:#f0f0f0"></div>
<svg style="left:245px;top:651px" width="11" height="6" viewBox="0 0 11 6"><path d="M0 0h11L5.500 6z" fill="#f4f4f4"/></svg>
<div style="left:96px;top:1067px;width:458px;height:8px;background:#7e7e7e;border-radius:4px"></div>
<div style="left:1907px;top:733px;width:8px;height:330px;background:#7e7e7e;border-radius:4px"></div>
</body></html>
